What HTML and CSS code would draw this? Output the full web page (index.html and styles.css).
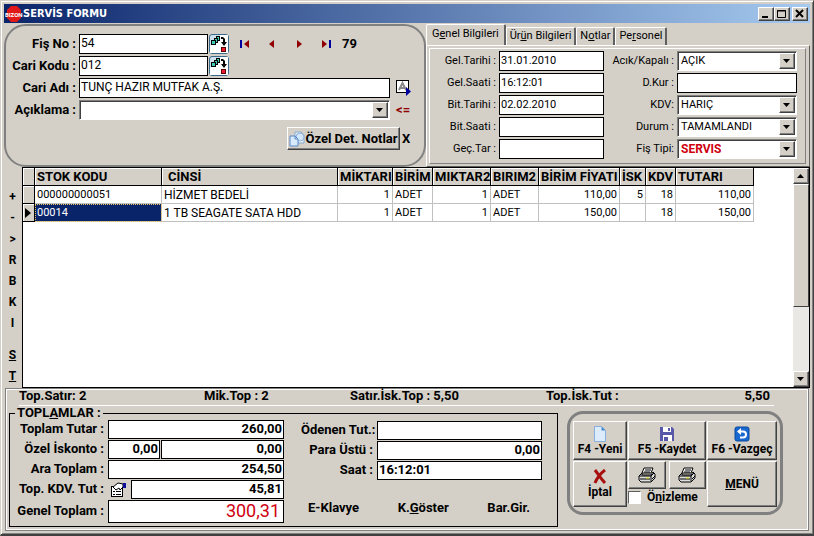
FILE: index.html
```
<!DOCTYPE html>
<html lang="tr">
    <head>
        <meta charset="utf-8">
        <title>SERVİS FORMU</title>
        <link rel="stylesheet" href="styles.css">
    </head>
    <body>
        <!-- ortak ikonlar -->
        <svg class="defs" width="0" height="0">
            <symbol id="browse" viewBox="0 0 18 18">
                <path d="M0 18V11L11 0H18V18Z" fill="#fff"/>
                <g fill="#40c8b8" stroke="#000">
                    <rect x="6.5" y="1.5" width="3" height="4"/>
                    <rect x="4.5" y="3.5" width="3" height="4"/>
                    <rect x="1.5" y="5.5" width="4" height="4"/>
                </g>
                <path d="M11 2h2l2 2v3h2l-3 4-3-4h2V4h-2z" fill="#000"/>
                <rect x="11.5" y="12.5" width="4" height="4" fill="#f01830" stroke="#500"/>
            </symbol>
            <symbol id="printer" viewBox="0 0 18 16">
                <path d="M6 1h9l-2 5H4z" fill="#fff" stroke="#000"/>
                <path d="M7 3h6M6 5h6" stroke="#000"/>
                <path d="M4 6L1 9v4l2 2h10l4-4V7l-2-2-2 3H4z" fill="#ddd" stroke="#000"/>
                <path d="M1 9h12l3-3M13 9v5M2 12h10M14 12l3-3" fill="none" stroke="#000"/>
                <path d="M8 11h3" stroke="#e8e000"/>
            </symbol>
            <symbol id="down" viewBox="0 0 8 4">
                <path d="M0 0h7L3.500 4z" fill="#000"/>
            </symbol>
        </svg>

        <div class="window">
            <header class="title">
                <svg class="logo" width="18" height="16" viewBox="0 0 18 16">
                    <path d="M6 0h6l4 4v8l-4 4H6l-4-4V4z" fill="#e01818"/>
                    <text x="0" y="11">BIZON</text>
                </svg>
                <h1>SERVİS FORMU</h1>
                <div class="winbtns">
                    <button type="button" aria-label="Simge durumu"><svg width="12" height="10"><path d="M2 8h6" stroke="#000" stroke-width="2"/></svg></button>
                    <button type="button" aria-label="Ekranı kapla"><svg width="12" height="10"><path d="M1.500 1.500h8v7h-8zM1 2h9" fill="none" stroke="#000"/></svg></button>
                    <button type="button" class="close" aria-label="Kapat"><svg width="12" height="10"><path d="M2 1l7 7M9 1l-7 7" stroke="#000" stroke-width="2"/></svg></button>
                </div>
            </header>

            <div class="top">
                <form class="card">
                    <div class="row">
                        <label for="fisno">Fiş No :</label>
                        <input type="text" class="code" id="fisno" value="54">
                        <button type="button" class="browse" aria-label="Fiş seç"><svg width="18" height="18"><use href="#browse"/></svg></button>
                        <div class="nav">
                            <button type="button" aria-label="İlk"><svg width="10" height="10"><path d="M1 1v8" stroke="#0000a0" stroke-width="2"/><path d="M9 1v8L4 5z" fill="#900000"/></svg></button>
                            <button type="button" aria-label="Önceki"><svg width="10" height="10"><path d="M7 1v8L2 5z" fill="#900000"/></svg></button>
                            <button type="button" aria-label="Sonraki"><svg width="10" height="10"><path d="M3 1v8l5-4z" fill="#900000"/></svg></button>
                            <button type="button" aria-label="Son"><svg width="10" height="10"><path d="M9 1v8" stroke="#0000a0" stroke-width="2"/><path d="M1 1v8l5-4z" fill="#900000"/></svg></button>
                            <b>79</b>
                        </div>
                    </div>
                    <div class="row">
                        <label for="cari">Cari Kodu :</label>
                        <input type="text" class="code" id="cari" value="012">
                        <button type="button" class="browse" aria-label="Cari seç"><svg width="18" height="18"><use href="#browse"/></svg></button>
                    </div>
                    <div class="row">
                        <label for="adi">Cari Adı :</label>
                        <input type="text" class="wide" id="adi" value="TUNÇ HAZIR MUTFAK A.Ş.">
                        <button type="button" class="flat" aria-label="Cari kartı">
                            <svg width="16" height="16"><rect x=".5" y=".5" width="12" height="12" fill="#fff" stroke="#000"/><path d="M3 10L6.500 3 10 10M4.500 8h4" fill="none" stroke="#888" stroke-width="2"/><path d="M10 7l5 4.500-5 4.500z" fill="#0000a0"/></svg>
                        </button>
                    </div>
                    <div class="row">
                        <label for="acik">Açıklama :</label>
                        <span class="combo wide"><select id="acik"><option></option></select><i><svg width="8" height="4"><use href="#down"/></svg></i></span>
                        <button type="button" class="flat arrow">&lt;=</button>
                    </div>
                    <div class="notes">
                        <button type="button" class="btn">
                            <svg width="16" height="16"><path d="M6 1h6l3 3v8H6z" fill="#e8f2fc" stroke="#88a8d0"/><circle cx="11" cy="6" r="4" fill="#d4e6fa" stroke="#90b0d8"/><path d="M1 5h5l3 3v7H1z" fill="#d8eafc" stroke="#5888c8"/><path d="M6 5v3h3" fill="none" stroke="#5888c8"/></svg>
                            Özel Det. Notlar
                        </button>
                        <button type="button" class="flat">X</button>
                    </div>
                </form>

                <div class="pages">
                    <div class="tabs" role="tablist">
                        <button type="button" role="tab" class="on">G<u>e</u>nel Bilgileri</button>
                        <button type="button" role="tab">Ür<u>ü</u>n Bilgileri</button>
                        <button type="button" role="tab">N<u>o</u>tlar</button>
                        <button type="button" role="tab">Pe<u>r</u>sonel</button>
                    </div>
                    <div class="page">
                        <form class="inner">
                            <div class="col dates">
                                <label for="gt">Gel.Tarihi :</label><input type="text" id="gt" value="31.01.2010">
                                <label for="gs">Gel.Saati :</label><input type="text" id="gs" value="16:12:01">
                                <label for="bt">Bit.Tarihi :</label><input type="text" id="bt" value="02.02.2010">
                                <label for="bs">Bit.Saati :</label><input type="text" id="bs">
                                <label for="gec">Geç.Tar :</label><input type="text" id="gec">
                            </div>
                            <div class="col kinds">
                                <label for="ak">Acık/Kapalı :</label><span class="combo"><select id="ak"><option>AÇIK</option></select><i><svg width="8" height="4"><use href="#down"/></svg></i></span>
                                <label for="kur">D.Kur :</label><input type="text" id="kur">
                                <label for="kdv">KDV:</label><span class="combo"><select id="kdv"><option>HARIÇ</option></select><i><svg width="8" height="4"><use href="#down"/></svg></i></span>
                                <label for="dur">Durum :</label><span class="combo"><select id="dur"><option>TAMAMLANDI</option></select><i><svg width="8" height="4"><use href="#down"/></svg></i></span>
                                <label for="tip">Fiş Tipi:</label><span class="combo red"><select id="tip"><option>SERVIS</option></select><i><svg width="8" height="4"><use href="#down"/></svg></i></span>
                            </div>
                        </form>
                    </div>
                </div>
            </div>

            <div class="middle">
                <div class="side">
                    <button type="button">+</button>
                    <button type="button">-</button>
                    <button type="button">&gt;</button>
                    <button type="button">R</button>
                    <button type="button">B</button>
                    <button type="button">K</button>
                    <button type="button">I</button>
                    <button type="button" class="gap"><u>S</u></button>
                    <button type="button"><u>T</u></button>
                </div>
                <div class="grid">
                    <div class="cells">
                        <table>
                            <colgroup>
                                <col class="c-ind"><col class="c-kod"><col class="c-cins"><col class="c-mik"><col class="c-bir"><col class="c-mik2"><col class="c-bir2"><col class="c-fiyat"><col class="c-isk"><col class="c-kdv"><col class="c-tutar">
                            </colgroup>
                            <thead>
                                <tr><th></th><th>STOK KODU</th><th class="pad">CİNSİ</th><th>MİKTARI</th><th>BİRİM</th><th>MIKTAR2</th><th>BIRIM2</th><th>BİRİM FİYATI</th><th>İSK</th><th>KDV</th><th>TUTARI</th></tr>
                            </thead>
                            <tbody>
                                <tr><td class="ind"></td><td>000000000051</td><td class="cins">HİZMET BEDELİ</td><td class="n">1</td><td>ADET</td><td class="n">1</td><td>ADET</td><td class="n">110,00</td><td class="n">5</td><td class="n">18</td><td class="n">110,00</td></tr>
                                <tr><td class="ind"><svg width="6" height="10"><path d="M0 0l6 5-6 5z"/></svg></td><td class="sel">00014</td><td class="cins">1 TB SEAGATE SATA HDD</td><td class="n">1</td><td>ADET</td><td class="n">1</td><td>ADET</td><td class="n">150,00</td><td class="n"></td><td class="n">18</td><td class="n">150,00</td></tr>
                            </tbody>
                        </table>
                    </div>
                    <div class="scroll">
                        <button type="button" aria-label="Yukarı"><svg width="8" height="4"><path d="M0 4h7L3.500 0z"/></svg></button>
                        <div class="thumb"></div>
                        <div class="track"></div>
                        <button type="button" aria-label="Aşağı"><svg width="8" height="4"><use href="#down"/></svg></button>
                    </div>
                </div>
            </div>

            <footer class="bottom">
                <div class="status">
                    <span>Top.Satır: 2</span>
                    <span>Mik.Top : 2</span>
                    <span>Satır.İsk.Top : 5,50</span>
                    <span>Top.İsk.Tut :</span>
                    <span class="last">5,50</span>
                </div>
                <div class="panels">
                    <fieldset>
                        <legend>TOPL<u>A</u>MLAR :</legend>
                        <div class="sums">
                            <div class="line"><label for="tt">Toplam Tutar :</label><input type="text" id="tt" value="260,00"></div>
                            <div class="line"><label for="oi">Özel İskonto :</label><input type="text" class="rate" id="oi" value="0,00"><input type="text" aria-label="İskonto tutarı" value="0,00"></div>
                            <div class="line"><label for="at">Ara Toplam :</label><input type="text" id="at" value="254,50"></div>
                            <div class="line kdv">
                                <label for="kt">Top. KDV. Tut :</label>
                                <button type="button" class="flat" aria-label="KDV dökümü">
                                    <svg width="17" height="15"><rect x="1.500" y="4.500" width="11" height="10" fill="#fff" stroke="#000"/><path d="M3 9.500h2M6 9.500h5M3 12.500h2M6 12.500h5" stroke="#000"/><path d="M3 5l5-4 5 1v3l-3 3-1-2-3 2z" fill="#fff" stroke="#000"/><path d="M13 1h3v5h-3z" fill="#1010a0"/></svg>
                                </button>
                                <input type="text" id="kt" value="45,81">
                            </div>
                            <div class="line total"><label for="gtp">Genel Toplam :</label><input type="text" id="gtp" value="300,31"></div>
                        </div>
                        <div class="pay">
                            <div class="line"><label for="od">Ödenen Tut.:</label><input type="text" id="od"></div>
                            <div class="line"><label for="pu">Para Üstü :</label><input type="text" id="pu" value="0,00"></div>
                            <div class="line"><label for="sa">Saat :</label><input type="text" class="time" id="sa" value="16:12:01"></div>
                            <div class="links">
                                <button type="button" class="flat">E-Klavye</button>
                                <button type="button" class="flat">K.<u>G</u>öster</button>
                                <button type="button" class="flat">Bar.Gir.</button>
                            </div>
                        </div>
                    </fieldset>

                    <div class="actions">
                        <button type="button" class="btn">
                            <svg width="16" height="16"><path d="M2.500.5h7l4 4v11h-11z" fill="#dcecfa" stroke="#88b0dc"/><path d="M9.500.5v4h4z" fill="#4888d0"/></svg>
                            F4 -Yeni
                        </button>
                        <button type="button" class="btn">
                            <svg width="16" height="16"><path d="M1 1h12l2 2v12H1z" fill="#5858a8"/><path d="M4 1h8v5H4zM4 9h9v6H4z" fill="#fff"/><path d="M9 2h2v3H9zM5 11h4v4H5z" fill="#5858a8"/></svg>
                            F5 -Kaydet
                        </button>
                        <button type="button" class="btn">
                            <svg width="16" height="16"><rect x="1" y="1" width="14" height="14" rx="2" fill="#1868d0" stroke="#0848a0"/><path d="M5 5.500h4a3 3 0 0 1 0 6H6" fill="none" stroke="#fff" stroke-width="2"/><path d="M7 2v7L3 5.500z" fill="#fff"/></svg>
                            F6 -Vazgeç
                        </button>
                        <button type="button" class="btn">
                            <svg width="16" height="16"><path d="M3 1c3 4 6 9 10 13M13 1C9 4 5 9 3 14" fill="none" stroke="#a81010" stroke-width="3"/></svg>
                            İptal
                        </button>
                        <div class="print">
                            <button type="button" class="btn" aria-label="Yazdır"><svg width="18" height="16"><use href="#printer"/></svg></button>
                            <button type="button" class="btn" aria-label="Yazdır 2"><svg width="18" height="16"><use href="#printer"/></svg></button>
                            <label><input type="checkbox"><span>Ö<u>n</u>izleme</span></label>
                        </div>
                        <button type="button" class="btn"><span><u>M</u>ENÜ</span></button>
                    </div>
                </div>
            </footer>
        </div>
    </body>
</html>
```
FILE: styles.css
```
*{
    margin:0;
    padding:0;
    box-sizing:border-box;
}
body{
    background-color:#d4d0c8;
    font-family:Roboto, "Liberation Sans", sans-serif;
    font-size:12px;
    line-height:14px;
    color:#000;
}
button, input, select{
    font:inherit;
    color:inherit;
}
button{
    border:0;
    background:none;
    white-space:nowrap;
}
svg{
    display:block;
    flex:none;
}
.defs{
    position:absolute;
}
.window{
    min-height:100vh;
    padding:3px 3px 2px 3px;
    border:1px solid #d4d0c8;
    border-right-color:#404040;
    border-bottom:2px solid #404040;
    box-shadow:inset 1px 1px #fff, inset -1px -1px #808080;
}
.title{
    display:flex;
    align-items:center;
    height:19px;
    padding:0 2px 0 1px;
    background:linear-gradient(to right, #0a246a, #a6caf0);
    color:#fff;
}
.logo text{
    font-size:6px;
    font-weight:bold;
    fill:#fff;
}
.title h1{
    flex:1;
    font-family:"DejaVu Sans Condensed", "DejaVu Sans", sans-serif;
    font-size:11px;
}
.winbtns{
    display:flex;
}
.winbtns button, .scroll button{
    display:flex;
    align-items:center;
    justify-content:center;
    width:16px;
    height:14px;
    background-color:#d4d0c8;
    border:1px solid #fff;
    border-right-color:#404040;
    border-bottom-color:#404040;
    box-shadow:inset -1px -1px #808080;
}
.winbtns .close{
    margin-left:2px;
}

/* ust kisim */
.top{
    display:flex;
    height:144px;
    padding-top:1px;
}
.card{
    flex:none;
    width:422px;
    padding:7px 0 0 2px;
    border:2px solid #808080;
    border-radius:22px;
    font-size:13px;
}
.row{
    display:flex;
    align-items:center;
    height:22px;
}
.row label{
    width:71px;
    padding-right:3px;
    text-align:right;
    font-weight:bold;
}
input[type=text]{
    min-width:0;
    height:20px;
    padding:0 1px 2px;
    border:1px solid #000;
    background-color:#fff;
}
.row .code{
    width:129px;
    font-size:12px;
}
.row .wide{
    width:311px;
    font-size:12px;
}
.browse{
    width:20px;
    height:20px;
    margin-left:1px;
    border:1px solid #38688c;
    border-radius:3px;
    background-color:#cfe0ee;
}
.nav{
    display:flex;
    align-items:center;
    gap:17px;
    margin-left:11px;
}
.nav button{
    display:flex;
    justify-content:center;
    width:10px;
}
.nav b{
    margin-left:-6px;
}
.flat{
    font-weight:bold;
}
.row .flat{
    margin-left:6px;
}
.arrow{
    color:#900000;
}
.combo{
    position:relative;
    display:block;
    height:20px;
    border:1px solid #808080;
    border-right-color:#fff;
    border-bottom-color:#fff;
    box-shadow:inset 1px 1px #404040;
    background-color:#fff;
}
.combo select{
    appearance:none;
    display:block;
    width:100%;
    height:17px;
    padding-left:3px;
    border:0;
    background:none;
}
.combo i{
    position:absolute;
    top:1px;
    right:1px;
    bottom:1px;
    width:16px;
    display:flex;
    align-items:center;
    justify-content:center;
    background-color:#d4d0c8;
    border:1px solid #fff;
    border-right-color:#404040;
    border-bottom-color:#404040;
    box-shadow:inset -1px -1px #808080;
    pointer-events:none;
}
.red{
    color:#d00010;
    font-size:12px;
    font-weight:bold;
}
.notes{
    display:flex;
    align-items:center;
    gap:2px;
    margin:6px 0 0 279px;
}
.btn{
    display:flex;
    flex-direction:column;
    align-items:center;
    justify-content:center;
    border:1px solid #fff;
    border-right-color:#404040;
    border-bottom-color:#404040;
    box-shadow:inset -1px -1px #808080;
    font-weight:bold;
}
.notes .btn{
    flex-direction:row;
    width:113px;
    height:23px;
}

/* sekmeler */
.pages{
    flex:1;
    display:flex;
    flex-direction:column;
    font-size:11px;
}
.tabs{
    display:flex;
    align-items:flex-end;
    height:21px;
}
.tabs button{
    height:18px;
    padding:0 3px 1px;
    border-left:1px solid #fff;
    border-top:1px solid #fff;
    border-right:2px solid #606060;
    border-radius:2px 2px 0 0;
}
.tabs .on{
    height:21px;
    padding:0 5px 3px;
}
.page{
    flex:1;
    padding:2px 3px 2px 2px;
    border:1px solid #fff;
    border-right-color:#606060;
    border-bottom-color:#606060;
}
.inner{
    display:flex;
    justify-content:space-between;
    height:100%;
    padding:1px 8px 0 2px;
    border:1px solid #fff;
    border-right-color:#808080;
    border-bottom-color:#808080;
}
.col{
    display:grid;
    grid-auto-rows:22px;
    align-items:center;
    column-gap:3px;
    text-align:right;
}
.dates{
    grid-template-columns:64px 105px;
}
.kinds{
    grid-template-columns:auto 120px;
}

/* tablo */
.middle{
    display:flex;
    height:221px;
}
.side{
    width:18px;
    padding:19px 2px 0 1px;
    display:flex;
    flex-direction:column;
}
.side button{
    height:21px;
    font-weight:bold;
}
.side .gap{
    margin-top:11px;
}
.grid{
    flex:1;
    min-width:0;
    display:flex;
    border:1px solid #000;
    background-color:#fff;
}
.cells{
    flex:1;
    overflow:hidden;
}
table{
    width:731px;
    table-layout:fixed;
    border-collapse:separate;
    border-spacing:0;
    font-size:11px;
}
.c-ind{width:12px;}
.c-kod{width:127px;}
.c-cins{width:176px;}
.c-mik{width:55px;}
.c-bir{width:40px;}
.c-mik2{width:58px;}
.c-bir2{width:48px;}
.c-fiyat{width:81px;}
.c-isk{width:26px;}
.c-kdv{width:30px;}
.c-tutar{width:78px;}
th, td{
    height:18px;
    padding:0 2px;
    text-align:left;
    white-space:nowrap;
    overflow:hidden;
}
th{
    font-size:13px;
}
th, .ind{
    background-color:#d4d0c8;
    border-right:1px solid #000;
    border-bottom:1px solid #000;
    box-shadow:inset 1px 1px #fff;
}
th.pad{
    padding-left:6px;
}
td{
    border-right:1px solid #c0c0c0;
    border-bottom:1px solid #c0c0c0;
}
.cins{
    font-size:12px;
}
.n{
    text-align:right;
}
td.sel{
    background-color:#0a246a;
    color:#fff;
    outline:1px dotted #e8c860;
    outline-offset:-1px;
}
.scroll{
    display:flex;
    flex-direction:column;
    width:16px;
}
.scroll button{
    height:16px;
}
.thumb{
    height:123px;
    background-color:#d4d0c8;
    border:1px solid #fff;
    border-right-color:#404040;
    border-bottom-color:#404040;
}
.track{
    flex:1;
    background-color:#eae8e4;
}

/* alt kisim */
.bottom{
    margin:0 1px;
    padding:0 3px 3px;
    border:1px solid #808080;
    box-shadow:inset 1px 1px #fff, inset -1px -1px #fff;
    font-size:13px;
    font-weight:bold;
}
.status{
    display:grid;
    grid-template-columns:185px 146px 196px 1fr auto;
    margin:0 31px 0 10px;
    padding:0 4px 2px 0;
    border-bottom:1px solid #fff;
}
.panels{
    display:flex;
    align-items:flex-start;
    padding-top:1px;
}
fieldset{
    display:flex;
    flex:none;
    width:549px;
    min-width:0;
    height:120px;
    margin-right:9px;
    padding:0 15px 0 2px;
    border:1px solid #000;
}
legend{
    margin-left:3px;
    padding:0 2px;
    line-height:12px;
}
.sums{
    flex:none;
    width:272px;
}
.pay{
    flex:1;
    min-width:0;
    padding:1px 0 0 17px;
}
.line{
    display:flex;
    align-items:center;
    height:20px;
    gap:1px;
}
.line label{
    flex:none;
    width:95px;
    padding-right:3px;
    text-align:right;
    white-space:nowrap;
}
.pay label{
    width:75px;
}
.line input{
    flex:1;
    height:19px;
    text-align:right;
}
.line .rate{
    flex:none;
    width:52px;
}
.line .time{
    text-align:left;
}
.kdv .flat{
    width:22px;
    padding-left:2px;
}
.total{
    height:24px;
}
.total input{
    height:23px;
    padding-right:3px;
    font-size:18px;
    font-weight:normal;
    color:#d00010;
}
.links{
    display:flex;
    justify-content:space-between;
    padding:21px 12px 0 7px;
}
.actions{
    display:grid;
    grid-template-columns:54px 78px 70px;
    grid-template-rows:39px 46px;
    gap:1px;
    margin-top:4px;
    padding:7px 3px 5px;
    border:3px solid #808080;
    border-radius:16px;
    font-size:12px;
}
.print{
    display:grid;
    grid-template-columns:1fr 1fr;
    grid-template-rows:28px 16px;
    column-gap:3px;
}
.print label{
    grid-column:1 / 3;
    display:flex;
    align-items:center;
}
.print input{
    appearance:none;
    width:13px;
    height:13px;
    margin-right:6px;
    border:1px solid #606060;
    border-right-color:#fff;
    border-bottom-color:#fff;
    background-color:#fff;
}
```
